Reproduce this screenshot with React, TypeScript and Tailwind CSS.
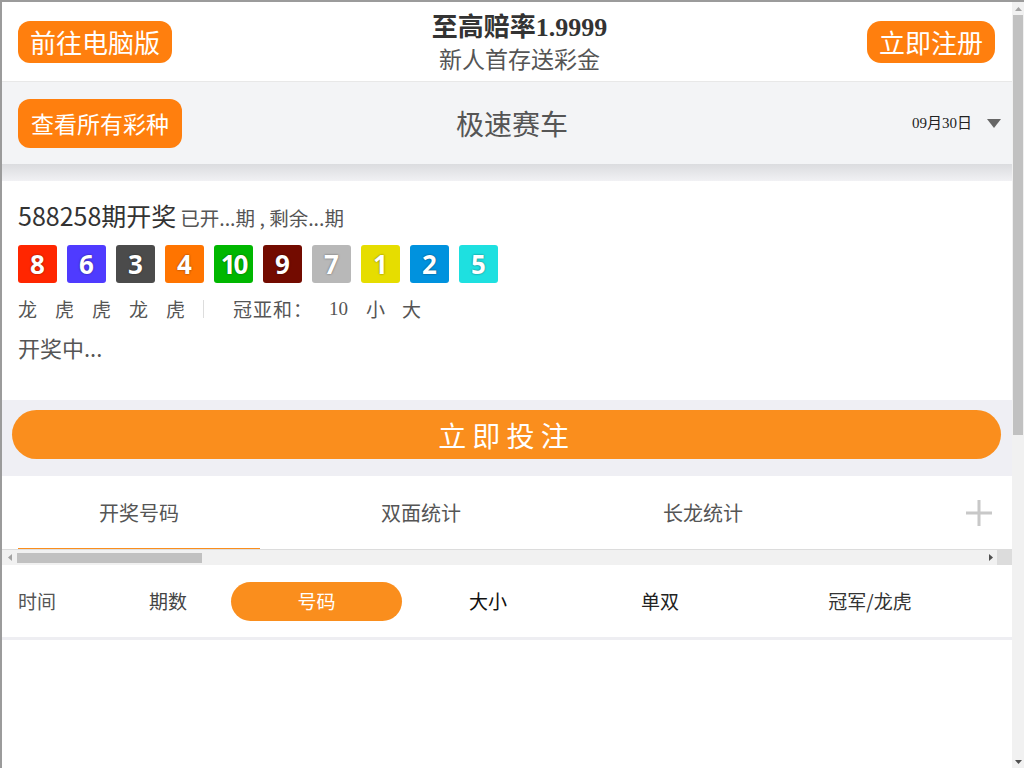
import React from 'react';

const CJK = "font-['Noto_Sans_CJK_SC',sans-serif]";

const BALLS: { n: number; bg: string }[] = [
  { n: 8, bg: 'bg-[#ff2600]' },
  { n: 6, bg: 'bg-[#4f3bff]' },
  { n: 3, bg: 'bg-[#4b4b4b]' },
  { n: 4, bg: 'bg-[#ff7400]' },
  { n: 10, bg: 'bg-[#00b700]' },
  { n: 9, bg: 'bg-[#730b00]' },
  { n: 7, bg: 'bg-[#b8b8b8]' },
  { n: 1, bg: 'bg-[#e6dd00]' },
  { n: 2, bg: 'bg-[#0092de]' },
  { n: 5, bg: 'bg-[#1ee0e0]' },
];

const DRAGON_TIGER = ['龙', '虎', '虎', '龙', '虎'];

const App: React.FC = () => {
  return (
    <div className={`h-[768px] w-full flex overflow-hidden border-t-2 border-l-2 border-[#9b9b9b] bg-white ${CJK}`}>
      <div className="flex-1 min-w-0 flex flex-col">
        {/* Header */}
        <div className="h-[80px] shrink-0 flex items-center justify-between pl-4 pr-[17px] border-b border-[#e8e8e8]">
          <button className="h-[42px] px-[12px] rounded-[12px] bg-[#ff7f0e] text-white text-[26px] leading-none">
            前往电脑版
          </button>
          <div className="flex flex-col items-center">
            <div className="text-[26px] leading-[32px] font-bold text-[#333] font-['Liberation_Serif','Noto_Sans_CJK_SC',serif]">
              至高赔率1.9999
            </div>
            <div className="text-[23px] leading-[28px] text-[#555]">新人首存送彩金</div>
          </div>
          <button className="h-[42px] px-[12px] rounded-[14px] bg-[#ff7f0e] text-white text-[26px] leading-none">
            立即注册
          </button>
        </div>

        {/* Lottery bar */}
        <div className="h-[82px] shrink-0 grid grid-cols-[1fr_auto_1fr] items-center bg-[#f3f4f6] pl-4 pr-[11px]">
          <div>
            <button className="h-[49px] px-[13px] rounded-[12px] bg-[#ff7f0e] text-white text-[23px] leading-none">
              查看所有彩种
            </button>
          </div>
          <div className="text-[28px] text-[#555] pl-[5px]">极速赛车</div>
          <div className="flex items-center justify-end">
            <div className="text-[15px] text-[#222] font-['Liberation_Serif','Noto_Sans_CJK_SC',serif]">09月30日</div>
            <svg width="14" height="9" viewBox="0 0 14 9" className="ml-[15px]">
              <path d="M0 0 L14 0 L7 9 Z" fill="#666" />
            </svg>
          </div>
        </div>
        <div className="h-[17px] shrink-0 bg-gradient-to-b from-[#dbdcdf] to-[#f1f1f4]" />

        {/* Draw result card */}
        <div className="h-[219px] shrink-0 pl-4 pt-[19px]">
          <div className="h-[30px] leading-[30px] flex items-baseline">
            <span className="text-[25px] text-[#333]">588258期开奖</span>
            <span className="text-[19.5px] text-[#555] ml-[4px]">已开...期 , 剩余...期</span>
          </div>
          <div className="mt-[15px] flex gap-[10px]">
            {BALLS.map((b) => (
              <div
                key={b.n}
                className={`w-[39px] h-[38px] rounded-[3px] ${b.bg} flex items-center justify-center text-white font-bold text-[26px] ${b.n === 10 ? 'tracking-[-2px]' : ''} font-['Open_Sans',sans-serif] [text-shadow:0_0_2px_rgba(0,0,0,0.55)]`}
              >
                {b.n}
              </div>
            ))}
          </div>
          <div className="mt-[14px] h-[24px] flex items-center text-[19px] text-[#555]">
            {DRAGON_TIGER.map((t, i) => (
              <span key={i} className="w-[37px]">{t}</span>
            ))}
            <span className="w-px h-[18px] bg-[#ddd]" />
            <span className="ml-[29px] tracking-[1px]">冠亚和</span>
            <span className="w-[19px] text-center">：</span>
            <span className="ml-[17px] font-['Liberation_Serif',serif] text-[19px]">10</span>
            <span className="ml-[18px]">小</span>
            <span className="ml-[17px]">大</span>
          </div>
          <div className="mt-[12px] h-[28px] leading-[28px] text-[22px] text-[#555]">开奖中...</div>
        </div>

        {/* Bet button band */}
        <div className="shrink-0 bg-[#efeff4] pt-[10px] pb-[17px] pl-[10px] pr-[11px]">
          <button className="w-full h-[49px] rounded-full bg-[#fa8e1d] text-white text-[28px] tracking-[0.22em] leading-none">
            立即投注
          </button>
        </div>

        {/* Tabs */}
        <div className="h-[73px] shrink-0 flex items-stretch pl-4 pr-[19px]">
          <div className="w-[242px] flex items-center justify-center text-[20px] text-[#555] border-b border-[#fa8e1d] pt-[2px]">
            开奖号码
          </div>
          <div className="w-[242px] ml-[40px] flex items-center justify-center text-[20px] text-[#555]">双面统计</div>
          <div className="w-[242px] ml-[40px] flex items-center justify-center text-[20px] text-[#555]">长龙统计</div>
          <div className="flex-1 flex items-center justify-end">
            <svg width="28" height="28" viewBox="0 0 28 28">
              <path d="M14 1 V27 M1 14 H27" stroke="#c8c8c8" strokeWidth="3" />
            </svg>
          </div>
        </div>

        {/* Horizontal scrollbar */}
        <div className="h-[16px] shrink-0 flex border-t border-[#dcdcdc] bg-[#f1f1f1]">
          <div className="w-[15px] flex items-center justify-center">
            <svg width="4" height="7" viewBox="0 0 4 7"><path d="M4 0 L0 3.5 L4 7 Z" fill="#a3a3a3" /></svg>
          </div>
          <div className="flex-1 flex items-center">
            <div className="w-[185px] h-[10px] bg-[#c1c1c1]" />
          </div>
          <div className="w-[12px] flex items-center justify-center">
            <svg width="4" height="7" viewBox="0 0 4 7"><path d="M0 0 L4 3.5 L0 7 Z" fill="#505050" /></svg>
          </div>
          <div className="w-[15px] bg-[#dcdcdc]" />
        </div>

        {/* Sub tabs */}
        <div className="h-[72px] shrink-0 flex items-center pl-4 text-[19px]">
          <div className="w-[40px] text-[#555]">时间</div>
          <div className="w-[80px] ml-[70px] text-center text-[#444]">期数</div>
          <div className="w-[171px] h-[39px] ml-[23px] rounded-full bg-[#fa8e1d] text-white flex items-center justify-center">
            号码
          </div>
          <div className="w-[80px] ml-[46px] text-center text-[#111]">大小</div>
          <div className="w-[80px] ml-[92px] text-center text-[#222]">单双</div>
          <div className="w-[120px] ml-[110px] text-center text-[#333]">冠军/龙虎</div>
        </div>
        <div className="h-[3px] shrink-0 bg-[#eeeef2]" />
        <div className="flex-1 bg-white" />
      </div>

      {/* Page scrollbar */}
      <div className="w-[12px] shrink-0 flex flex-col bg-[#f1f1f1]">
        <div className="h-[13px] flex items-center justify-center">
          <svg width="7" height="4" viewBox="0 0 7 4"><path d="M0 4 L3.5 0 L7 4 Z" fill="#a3a3a3" /></svg>
        </div>
        <div className="h-[420px] mx-[1px] bg-[#c1c1c1]" />
        <div className="flex-1" />
        <div className="h-[13px] flex items-center justify-center">
          <svg width="7" height="4" viewBox="0 0 7 4"><path d="M0 0 L7 0 L3.5 4 Z" fill="#505050" /></svg>
        </div>
      </div>
    </div>
  );
};

export default App;
